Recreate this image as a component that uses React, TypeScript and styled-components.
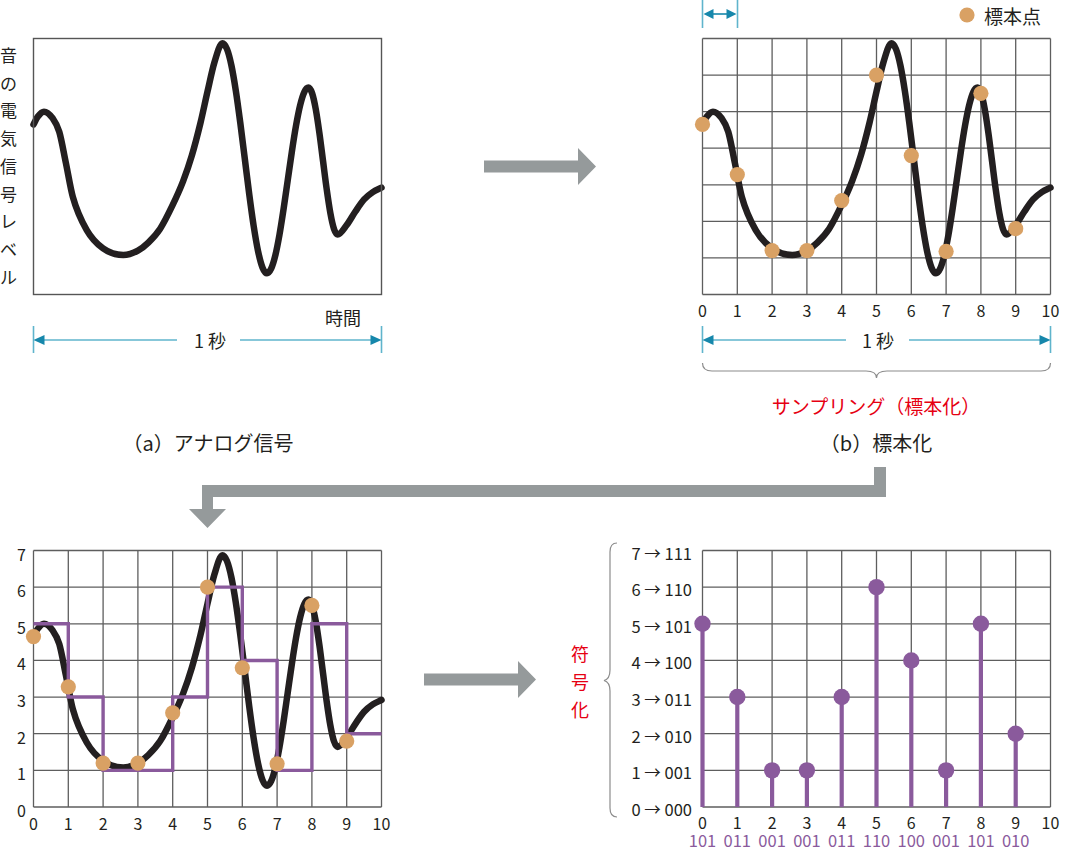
import React from 'react';
import styled, { createGlobalStyle } from 'styled-components';

const INK = '#231f20';
const GRID = '#5e5e5e';
const TEAL_LINE = '#5fb4cc';
const TEAL_HEAD = '#1687ab';
const GRAY_ARROW = '#959a9b';
const ORANGE = '#d9a164';
const PURPLE = '#8a5a9c';
const RED = '#e60012';
const FONT = "'Noto Sans CJK JP', 'Noto Sans', sans-serif";

const GlobalStyle = createGlobalStyle`
  html, body {
    margin: 0;
    padding: 0;
    background: #fff;
  }
  body {
    font-family: ${FONT};
    color: ${INK};
  }
`;

// half a cosine between two extrema, sampled n times
function halfWave(xa: number, ya: number, xb: number, yb: number, n = 8): [number, number][] {
  const out: [number, number][] = [];
  for (let k = 1; k <= n; k++) {
    const t = k / n;
    out.push([xa + (xb - xa) * t, ya + ((yb - ya) * (1 - Math.cos(Math.PI * t))) / 2]);
  }
  return out;
}

// the sound wave, in grid units (x 0..10, y 0..7)
const curvePts: [number, number][] = [
  [0, 4.65], [0.12, 4.86], [0.3, 5.0], [0.55, 4.82], [0.74, 4.45], [0.93, 3.6],
  [1.13, 2.67], [1.53, 1.76], [2, 1.26], [2.58, 1.08],
  [3, 1.2], [3.3, 1.42], [3.64, 1.8], [4, 2.45], [4.3, 3.1], [4.55, 3.8],
  [4.8, 4.7], [5, 5.55], [5.2, 6.35], [5.43, 6.87],
  ...halfWave(5.43, 6.87, 6.71, 0.58, 10),
  ...halfWave(6.71, 0.58, 7.9, 5.66, 10),
  ...halfWave(7.9, 5.66, 8.74, 1.64, 8),
  [9, 1.9], [9.25, 2.27], [9.5, 2.6], [9.75, 2.8], [10, 2.92],
];
const samples = [4.65, 3.28, 1.2, 1.2, 2.57, 6.0, 3.8, 1.18, 5.5, 1.8];
const levels = [5, 3, 1, 1, 3, 6, 4, 1, 5, 2];
const bits = (v: number) => v.toString(2).padStart(3, '0');

type Frame = { left: number; top: number; width: number; height: number };
const sx = (f: Frame, x: number) => f.left + (x * f.width) / 10;
const sy = (f: Frame, y: number) => f.top + f.height - (y * f.height) / 7;

const frameA: Frame = { left: 33.5, top: 38.5, width: 348, height: 256 };
const frameB: Frame = { left: 702.5, top: 38.5, width: 348, height: 256 };
const frameC: Frame = { left: 33.5, top: 550.5, width: 348, height: 256.5 };
const frameD: Frame = { left: 702.5, top: 550.5, width: 348, height: 256.5 };

// monotone cubic (Fritsch–Carlson) through the wave points
function wavePath(f: Frame) {
  const xs = curvePts.map((p) => p[0]);
  const ys = curvePts.map((p) => p[1]);
  const n = xs.length;
  const d: number[] = [];
  for (let k = 0; k < n - 1; k++) d.push((ys[k + 1] - ys[k]) / (xs[k + 1] - xs[k]));
  const m: number[] = new Array(n).fill(0);
  m[0] = d[0];
  m[n - 1] = d[n - 2];
  for (let k = 1; k < n - 1; k++) {
    m[k] = d[k - 1] * d[k] <= 0 ? 0 : (d[k - 1] + d[k]) / 2;
  }
  for (let k = 0; k < n - 1; k++) {
    if (d[k] === 0) {
      m[k] = 0;
      m[k + 1] = 0;
      continue;
    }
    const a = m[k] / d[k];
    const b = m[k + 1] / d[k];
    const s = a * a + b * b;
    if (s > 9) {
      const t = 3 / Math.sqrt(s);
      m[k] = t * a * d[k];
      m[k + 1] = t * b * d[k];
    }
  }
  let path = `M${sx(f, xs[0])},${sy(f, ys[0])}`;
  for (let k = 0; k < n - 1; k++) {
    const h = xs[k + 1] - xs[k];
    const c1 = [xs[k] + h / 3, ys[k] + (m[k] * h) / 3];
    const c2 = [xs[k + 1] - h / 3, ys[k + 1] - (m[k + 1] * h) / 3];
    path += ` C${sx(f, c1[0])},${sy(f, c1[1])} ${sx(f, c2[0])},${sy(f, c2[1])} ${sx(f, xs[k + 1])},${sy(f, ys[k + 1])}`;
  }
  return path;
}

const Page = styled.div`
  width: 1080px;
  height: 855px;
  display: flex;
  flex-direction: column;
  overflow: hidden;
`;

const Row = styled.div<{ $h: number }>`
  display: flex;
  height: ${(p) => p.$h}px;
`;

const Panel = styled.div<{ $w: number }>`
  width: ${(p) => p.$w}px;
  display: flex;
  flex-direction: column;
  flex-shrink: 0;
`;

const PlotRow = styled.div`
  display: flex;
  height: 429px;
`;

const VLabel = styled.div`
  width: 17px;
  margin-top: 41px;
  margin-right: 17px;
  font-size: 17px;
  line-height: 27.7px;
  word-break: break-all;
  color: ${INK};
`;

const CodeLabel = styled.div`
  width: 18px;
  margin: 0 11px;
  padding-top: 109px;
  font-size: 18px;
  line-height: 28px;
  word-break: break-all;
  color: ${RED};
  flex-shrink: 0;
`;

const Caption = styled.div<{ $offset: number }>`
  margin-left: ${(p) => p.$offset}px;
  width: 348px;
  font-size: 20px;
  line-height: 28px;
  text-align: center;
  color: ${INK};
`;

const RedNote = styled.div`
  margin-left: 22px;
  width: 348px;
  height: 28px;
  margin-bottom: 9px;
  font-size: 19px;
  line-height: 28px;
  text-align: center;
  color: ${RED};
`;

const ArrowCell = styled.div<{ $w: number; $top: number }>`
  width: ${(p) => p.$w}px;
  padding-top: ${(p) => p.$top}px;
  display: flex;
  justify-content: center;
  align-items: flex-start;
  flex-shrink: 0;
  box-sizing: border-box;
`;

const Chart = styled.svg`
  display: block;
  flex-shrink: 0;
  overflow: visible;
  text {
    font-family: ${FONT};
    fill: ${INK};
  }
`;

const Grid: React.FC<{ f: Frame }> = ({ f }) => (
  <g stroke={GRID} strokeWidth={1.3}>
    {Array.from({ length: 11 }, (_, i) => (
      <line key={`v${i}`} x1={sx(f, i)} y1={f.top} x2={sx(f, i)} y2={f.top + f.height} />
    ))}
    {Array.from({ length: 8 }, (_, j) => (
      <line key={`h${j}`} x1={f.left} y1={sy(f, j)} x2={f.left + f.width} y2={sy(f, j)} />
    ))}
  </g>
);

const XTicks: React.FC<{ f: Frame; y: number }> = ({ f, y }) => (
  <g>
    {Array.from({ length: 11 }, (_, i) => (
      <text key={i} x={sx(f, i)} y={y} fontSize={16} textAnchor="middle" dominantBaseline="central">
        {i}
      </text>
    ))}
  </g>
);

const Wave: React.FC<{ f: Frame }> = ({ f }) => (
  <path d={wavePath(f)} fill="none" stroke={INK} strokeWidth={6.5} strokeLinecap="round" strokeLinejoin="round" />
);

const SampleDots: React.FC<{ f: Frame }> = ({ f }) => (
  <g fill={ORANGE}>
    {samples.map((v, i) => (
      <circle key={i} cx={sx(f, i)} cy={sy(f, v)} r={7.6} />
    ))}
  </g>
);

interface DimProps {
  x1: number;
  x2: number;
  y: number;
  gapStart: number;
  gapEnd: number;
  labelX: number;
}

const DimArrow: React.FC<DimProps> = ({ x1, x2, y, gapStart, gapEnd, labelX }) => (
  <g>
    <line x1={x1} y1={y - 14} x2={x1} y2={y + 13} stroke={TEAL_LINE} strokeWidth={1.6} />
    <line x1={x2} y1={y - 14} x2={x2} y2={y + 13} stroke={TEAL_LINE} strokeWidth={1.6} />
    <line x1={x1 + 8} y1={y} x2={gapStart} y2={y} stroke={TEAL_LINE} strokeWidth={1.6} />
    <line x1={gapEnd} y1={y} x2={x2 - 8} y2={y} stroke={TEAL_LINE} strokeWidth={1.6} />
    <polygon points={`${x1},${y} ${x1 + 11},${y - 5} ${x1 + 11},${y + 5}`} fill={TEAL_HEAD} />
    <polygon points={`${x2},${y} ${x2 - 11},${y - 5} ${x2 - 11},${y + 5}`} fill={TEAL_HEAD} />
    <text x={labelX} y={y} fontSize={18} textAnchor="middle" dominantBaseline="central">
      1 秒
    </text>
  </g>
);

const RightArrow: React.FC = () => (
  <svg width={112} height={37} viewBox="0 0 112 37" style={{ display: 'block' }}>
    <polygon points="0,12.5 94,12.5 94,0 112,18.5 94,37 94,24.5 0,24.5" fill={GRAY_ARROW} />
  </svg>
);

const AnalogChart: React.FC = () => (
  <Chart width={366} height={429} viewBox="34 0 366 429">
    <Wave f={frameA} />
    <rect x={frameA.left} y={frameA.top} width={frameA.width} height={frameA.height} fill="none" stroke="#555" strokeWidth={1.4} />
    <text x={343} y={317} fontSize={18} textAnchor="middle" dominantBaseline="central">
      時間
    </text>
    <DimArrow x1={33.5} x2={381.5} y={340} gapStart={177} gapEnd={240} labelX={210} />
  </Chart>
);

const SamplingChart: React.FC = () => (
  <Chart width={400} height={392} viewBox="680 0 400 392">
    <line x1={702.5} y1={0} x2={702.5} y2={28} stroke={TEAL_LINE} strokeWidth={1.6} />
    <line x1={737.5} y1={0} x2={737.5} y2={28} stroke={TEAL_LINE} strokeWidth={1.6} />
    <line x1={710} y1={14} x2={730} y2={14} stroke={TEAL_HEAD} strokeWidth={1.6} />
    <polygon points="703.5,14 713.5,9 713.5,19" fill={TEAL_HEAD} />
    <polygon points="736.5,14 726.5,9 726.5,19" fill={TEAL_HEAD} />
    <circle cx={967} cy={15} r={7.6} fill={ORANGE} />
    <text x={984} y={15} fontSize={19} dominantBaseline="central">
      標本点
    </text>
    <Grid f={frameB} />
    <Wave f={frameB} />
    <SampleDots f={frameB} />
    <XTicks f={frameB} y={309.5} />
    <DimArrow x1={702.5} x2={1050.5} y={340} gapStart={846} gapEnd={909} labelX={878} />
    <path
      d="M702.5,363 Q702.5,371 712,371 L866,371 Q876.5,371 876.5,378 Q876.5,371 887,371 L1041,371 Q1050.5,371 1050.5,363"
      fill="none"
      stroke="#8c8c8c"
      strokeWidth={1.2}
    />
  </Chart>
);

const ElbowArrow: React.FC = () => (
  <svg width={1080} height={70} viewBox="0 460 1080 70" style={{ display: 'block' }}>
    <polygon
      points="874,467 886,467 886,497 213,497 213,509 226,509 207.5,528 189,509 202,509 202,485 874,485"
      fill={GRAY_ARROW}
    />
  </svg>
);

const QuantChart: React.FC = () => {
  const f = frameC;
  let step = `M${sx(f, 0)},${sy(f, levels[0])}`;
  levels.forEach((v, i) => {
    step += ` L${sx(f, i)},${sy(f, v)} L${sx(f, i + 1)},${sy(f, v)}`;
  });
  return (
    <Chart width={400} height={325} viewBox="0 530 400 325">
      <Grid f={f} />
      <Wave f={f} />
      <path d={step} fill="none" stroke={PURPLE} strokeWidth={3.4} strokeLinejoin="miter" />
      <SampleDots f={f} />
      {Array.from({ length: 8 }, (_, j) => (
        <text key={j} x={21.5} y={sy(f, j) + 3} fontSize={16} textAnchor="middle" dominantBaseline="central">
          {j}
        </text>
      ))}
      <XTicks f={f} y={822.5} />
    </Chart>
  );
};

const CodeChart: React.FC = () => {
  const f = frameD;
  return (
    <Chart width={480} height={325} viewBox="600 530 480 325">
      <path
        d="M617,543 Q610,543 610,552 L610,670 Q610,679 604,680.5 Q610,682 610,691 L610,808 Q610,817 617,817"
        fill="none"
        stroke="#8c8c8c"
        strokeWidth={1.2}
      />
      {Array.from({ length: 8 }, (_, j) => (
        <text key={j} x={692} y={sy(f, j) + 2} fontSize={16.5} textAnchor="end" dominantBaseline="central">
          {j} → {bits(j)}
        </text>
      ))}
      <Grid f={f} />
      <g fill={PURPLE} stroke={PURPLE}>
        {levels.map((v, i) => (
          <g key={i}>
            <line x1={sx(f, i)} y1={f.top + f.height} x2={sx(f, i)} y2={sy(f, v)} strokeWidth={4.2} />
            <circle cx={sx(f, i)} cy={sy(f, v)} r={8.2} stroke="none" />
          </g>
        ))}
      </g>
      <XTicks f={f} y={821.5} />
      {levels.map((v, i) => (
        <text key={i} x={sx(f, i)} y={840} fontSize={16.5} textAnchor="middle" dominantBaseline="central" style={{ fill: PURPLE }}>
          {bits(v)}
        </text>
      ))}
    </Chart>
  );
};

const App: React.FC = () => (
  <>
    <GlobalStyle />
    <Page>
      <Row $h={460}>
        <Panel $w={400}>
          <PlotRow>
            <VLabel>音の電気信号レベル</VLabel>
            <AnalogChart />
          </PlotRow>
          <Caption $offset={34}>（a）アナログ信号</Caption>
        </Panel>
        <ArrowCell $w={280} $top={148}>
          <RightArrow />
        </ArrowCell>
        <Panel $w={400}>
          <SamplingChart />
          <RedNote>サンプリング（標本化）</RedNote>
          <Caption $offset={22}>（b）標本化</Caption>
        </Panel>
      </Row>
      <ElbowArrow />
      <Row $h={325}>
        <Panel $w={400}>
          <QuantChart />
        </Panel>
        <ArrowCell $w={160} $top={131}>
          <RightArrow />
        </ArrowCell>
        <Row $h={325}>
          <CodeLabel>符号化</CodeLabel>
          <CodeChart />
        </Row>
      </Row>
    </Page>
  </>
);

export default App;
